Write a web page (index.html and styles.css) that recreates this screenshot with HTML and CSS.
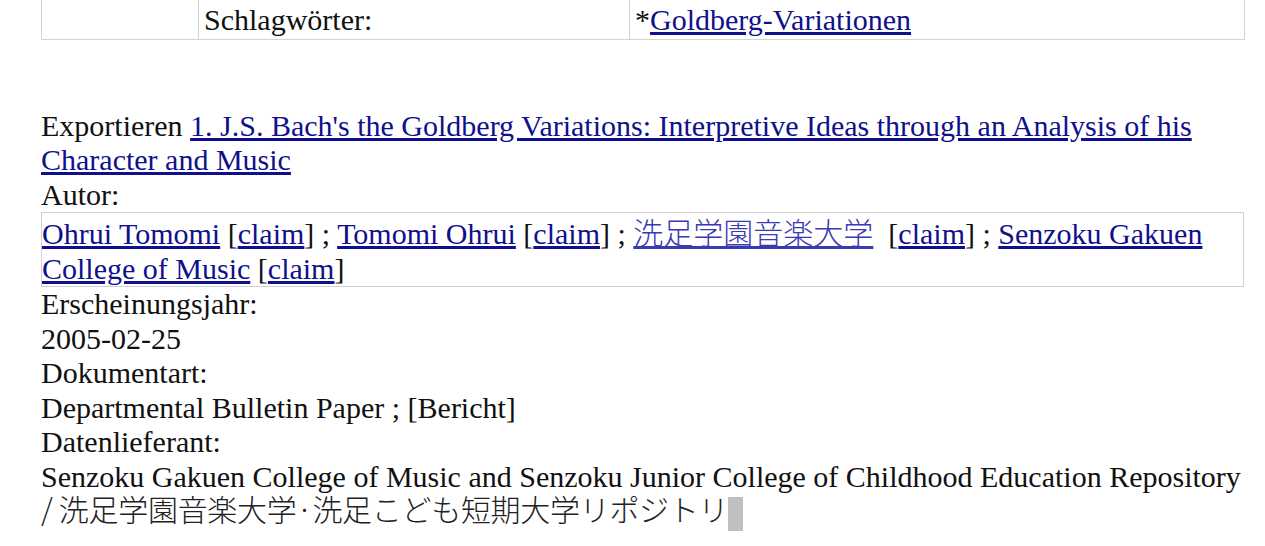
FILE: index.html
```html
<!DOCTYPE html>
<html lang="de">
<head>
    <meta charset="UTF-8">
    <title>Goldberg-Variationen</title>
    <link rel="stylesheet" href="styles.css">
</head>
<body>
    <div class="page">
        <table class="details">
            <colgroup>
                <col class="col-empty">
                <col class="col-label">
                <col class="col-value">
            </colgroup>
            <tr>
                <td></td>
                <td>Schlagwörter:</td>
                <td>*<a href="#">Goldberg-Variationen</a></td>
            </tr>
        </table>

        <div class="record">
            <div class="title-line">Exportieren <a href="#">1. J.S. Bach's the Goldberg Variations: Interpretive Ideas through an Analysis of his Character and Music</a></div>
            <div class="label">Autor:</div>
            <div class="authors">
                <a href="#">Ohrui Tomomi</a> [<a href="#">claim</a>] ; <a href="#">Tomomi Ohrui</a> [<a href="#">claim</a>] ; <a href="#" class="cjk-link">洗足学園音楽大学</a>&nbsp; [<a href="#">claim</a>] ; <a href="#">Senzoku Gakuen College of Music</a> [<a href="#">claim</a>]
            </div>
            <div class="label">Erscheinungsjahr:</div>
            <div class="value">2005-02-25</div>
            <div class="label">Dokumentart:</div>
            <div class="value">Departmental Bulletin Paper ; [Bericht]</div>
            <div class="label">Datenlieferant:</div>
            <div class="value">Senzoku Gakuen College of Music and Senzoku Junior College of Childhood Education Repository <span class="cjk">/ 洗足学園音楽大学·洗足こども短期大学リポジトリ</span><span class="caret"></span></div>
        </div>
    </div>
</body>
</html>
```

FILE: styles.css
```css
body {
    margin: 0;
    font-family: "Liberation Serif", "Noto Sans CJK JP", serif;
    font-size: 30px;
    line-height: 34.5px;
    color: #111;
    background: #fff;
}
a {
    color: #10108c;
}
.page {
    width: 1203px;
    margin-left: 41px;
}
.details {
    width: 1204px;
    margin-top: -4px;
    border-collapse: collapse;
    table-layout: fixed;
}
.col-empty {
    width: 157px;
}
.col-label {
    width: 431px;
}
.details td {
    border: 1px solid #d4d4d4;
    padding: 6px 5px 1px 5px;
}
.record {
    margin-top: 69px;
}
.authors {
    border: 1px solid #d0d0d0;
    padding: 4px 0 0 0;
}
.cjk-link {
    font-family: "Noto Sans CJK JP", sans-serif;
    font-weight: 300;
    line-height: 0;
    color: #3a3ab0;
}
.cjk {
    font-family: "Noto Sans CJK JP", sans-serif;
    font-weight: 300;
    line-height: 0;
    letter-spacing: -0.3px;
    color: #222;
}
.caret {
    display: inline-block;
    width: 15px;
    height: 34px;
    vertical-align: -10px;
    background: #c0c0c0;
}
```
